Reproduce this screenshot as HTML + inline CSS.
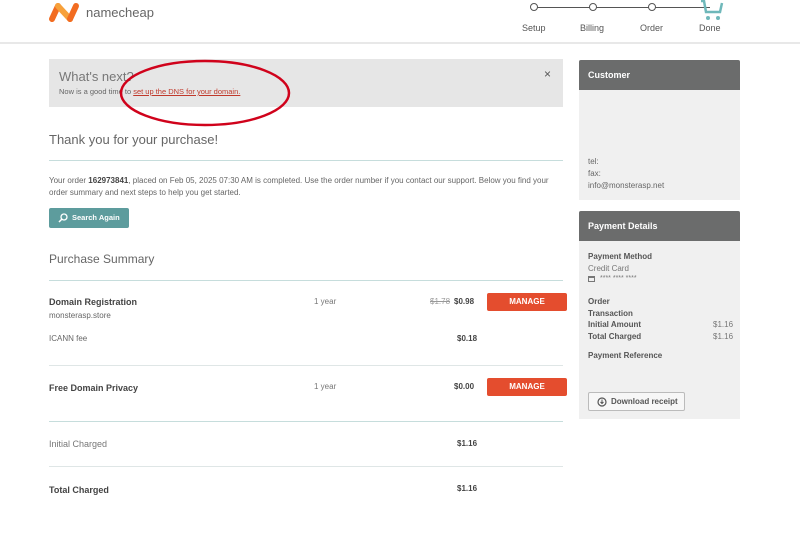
<!DOCTYPE html>
<html><head><meta charset="utf-8"><style>
*{margin:0;padding:0;box-sizing:border-box}
body{width:800px;height:533px;background:#fff;font-family:"Liberation Sans",sans-serif;color:#555;position:relative;overflow:hidden}
.a{position:absolute;white-space:nowrap}
.s8{font-size:8px}
.b{font-weight:bold;color:#444}
.line{position:absolute;height:1px;background:#dfe6e6}
.tl{background:#c6dddc}
.btn{position:absolute;background:#e44d2e;color:#fff;font-size:8px;font-weight:bold;text-align:center;border-radius:2px;line-height:18px;width:80px;height:18px;left:487px}
</style></head><body>
<!-- logo -->
<svg class="a" style="left:48px;top:1px" width="34" height="22" viewBox="0 0 34 22">
<path d="M4 18 L10 5" fill="none" stroke="#f26c21" stroke-width="6" stroke-linecap="round"/>
<path d="M10 5 L22 18" fill="none" stroke="#f7a13b" stroke-width="6" stroke-linecap="round"/>
<path d="M22 18 L28 5" fill="none" stroke="#f26c21" stroke-width="6" stroke-linecap="round"/>
</svg>
<div class="a" style="left:86px;top:5px;font-size:13px;color:#666">namecheap</div>
<!-- progress -->
<div class="a" style="left:534px;top:7px;width:176px;height:1px;background:#555"></div>
<div class="a" style="left:530px;top:3px;width:8px;height:8px;border:1px solid #555;border-radius:50%;background:#fff"></div>
<div class="a" style="left:589px;top:3px;width:8px;height:8px;border:1px solid #555;border-radius:50%;background:#fff"></div>
<div class="a" style="left:648px;top:3px;width:8px;height:8px;border:1px solid #555;border-radius:50%;background:#fff"></div>
<svg class="a" style="left:698px;top:0" width="26" height="22" viewBox="0 0 26 22"><path d="M3 1 L6 1 L8 12 L22 12 L24 3" fill="none" stroke="#6fb8ba" stroke-width="2.5"/><circle cx="10" cy="18" r="2" fill="#6fb8ba"/><circle cx="20" cy="18" r="2" fill="#6fb8ba"/></svg>
<div class="a s8" style="left:522px;top:23px;font-size:9px">Setup</div>
<div class="a s8" style="left:580px;top:23px;font-size:9px">Billing</div>
<div class="a s8" style="left:640px;top:23px;font-size:9px">Order</div>
<div class="a s8" style="left:699px;top:23px;font-size:9px">Done</div>
<div class="a" style="left:0;top:42px;width:800px;height:2px;background:#e8e8e8"></div>
<!-- alert -->
<div class="a" style="left:49px;top:59px;width:514px;height:48px;background:#e6e6e6"></div>
<div class="a" style="left:59px;top:69px;font-size:13px;color:#777">What's next?</div>
<div class="a" style="left:59px;top:87px;font-size:7.5px;color:#666">Now is a good time to <span style="color:#c0392b;text-decoration:underline">set up the DNS for your domain.</span></div>
<div class="a" style="left:544px;top:67px;font-size:12px;color:#555">×</div>
<svg class="a" style="left:118px;top:59px" width="176" height="70"><ellipse cx="87" cy="34" rx="84" ry="32" fill="none" stroke="#d0021b" stroke-width="2.5"/></svg>
<!-- main -->
<div class="a" style="left:49px;top:132px;font-size:13px;color:#666">Thank you for your purchase!</div>
<div class="line tl" style="left:49px;top:160px;width:514px"></div>
<div class="a s8" style="left:49px;top:175px;line-height:11.5px;color:#666">Your order <b style="color:#444">162973841</b>, placed on Feb 05, 2025 07:30 AM is completed. Use the order number if you contact our support. Below you find your<br>order summary and next steps to help you get started.</div>
<div class="a" style="left:49px;top:208px;width:80px;height:20px;background:#5d9c9d;border-radius:2px;color:#fff;font-size:7.5px;font-weight:bold;line-height:20px;padding-left:23px">Search Again</div>
<svg class="a" style="left:58px;top:213px" width="10" height="10"><circle cx="6" cy="4" r="3" fill="none" stroke="#fff" stroke-width="1.3"/><path d="M4 6 L1 9" stroke="#fff" stroke-width="1.5"/></svg>
<div class="a" style="left:49px;top:252px;font-size:12px;color:#666">Purchase Summary</div>
<div class="line tl" style="left:49px;top:280px;width:514px"></div>
<div class="a" style="left:49px;top:297px;font-size:9px;font-weight:bold;color:#444">Domain Registration</div>
<div class="a s8" style="left:49px;top:311px;color:#666">monsterasp.store</div>
<div class="a s8" style="left:314px;top:297px;color:#777">1 year</div>
<div class="a s8" style="left:430px;top:297px;color:#999;text-decoration:line-through">$1.78</div>
<div class="a s8 b" style="left:454px;top:297px">$0.98</div>
<div class="btn" style="top:293px">MANAGE</div>
<div class="a s8" style="left:49px;top:334px;color:#666">ICANN fee</div>
<div class="a s8 b" style="left:457px;top:334px">$0.18</div>
<div class="line" style="left:49px;top:365px;width:514px"></div>
<div class="a" style="left:49px;top:383px;font-size:9px;font-weight:bold;color:#444">Free Domain Privacy</div>
<div class="a s8" style="left:314px;top:382px;color:#777">1 year</div>
<div class="a s8 b" style="left:454px;top:382px">$0.00</div>
<div class="btn" style="top:378px">MANAGE</div>
<div class="line tl" style="left:49px;top:421px;width:514px"></div>
<div class="a" style="left:49px;top:439px;font-size:9px;color:#777">Initial Charged</div>
<div class="a s8 b" style="left:457px;top:439px">$1.16</div>
<div class="line" style="left:49px;top:466px;width:514px"></div>
<div class="a" style="left:49px;top:485px;font-size:9px;font-weight:bold;color:#444">Total Charged</div>
<div class="a s8 b" style="left:457px;top:484px">$1.16</div>
<!-- sidebar -->
<div class="a" style="left:579px;top:60px;width:161px;height:140px;background:#f0f0f0"></div>
<div class="a" style="left:579px;top:60px;width:161px;height:30px;background:#6b6c6c;border-radius:2px 2px 0 0;color:#fff;font-size:9px;font-weight:bold;line-height:30px;padding-left:9px">Customer</div>
<div class="a s8" style="left:588px;top:156px;line-height:12px;color:#666">tel:<br>fax:<br>info@monsterasp.net</div>
<div class="a" style="left:579px;top:211px;width:161px;height:208px;background:#f0f0f0"></div>
<div class="a" style="left:579px;top:211px;width:161px;height:30px;background:#6b6c6c;border-radius:2px 2px 0 0;color:#fff;font-size:9px;font-weight:bold;line-height:30px;padding-left:9px">Payment Details</div>
<div class="a s8 b" style="left:588px;top:252px;color:#555">Payment Method</div>
<div class="a s8" style="left:588px;top:264px;color:#777">Credit Card</div>
<div class="a" style="left:588px;top:276px;width:7px;height:6px;border:1px solid #777;border-top-width:2px"></div>
<div class="a" style="left:600px;top:275px;font-size:7px;color:#777">**** **** ****</div>
<div class="a s8 b" style="left:588px;top:296px;color:#555;line-height:11.7px">Order<br>Transaction<br>Initial Amount<br>Total Charged</div>
<div class="a s8" style="left:713px;top:319px;color:#777;line-height:11.7px">$1.16<br>$1.16</div>
<div class="a s8 b" style="left:588px;top:351px;color:#555">Payment Reference</div>
<div class="a" style="left:588px;top:392px;width:97px;height:19px;border:1px solid #bbb;border-radius:2px;background:#f7f7f7;font-size:8px;font-weight:bold;color:#555;line-height:17px;padding-left:22px">Download receipt</div>
<svg class="a" style="left:597px;top:397px" width="10" height="10"><circle cx="5" cy="5" r="4" fill="none" stroke="#555" stroke-width="1.2"/><path d="M5 2.5 V6.5 M3.5 5 L5 6.5 L6.5 5" fill="none" stroke="#555" stroke-width="1"/></svg>
</body></html>
